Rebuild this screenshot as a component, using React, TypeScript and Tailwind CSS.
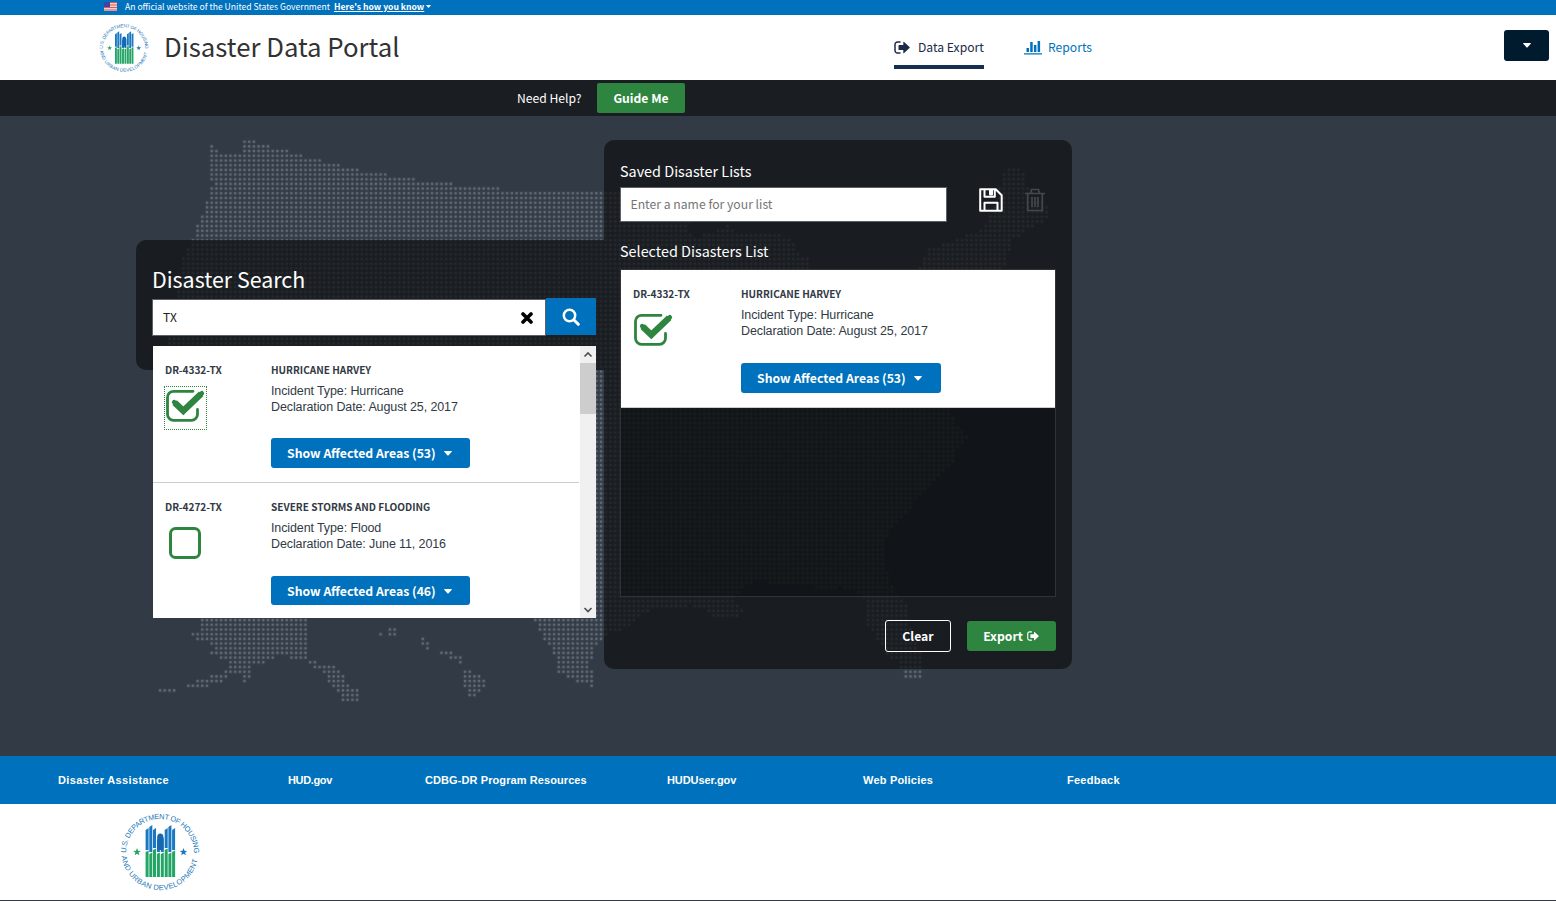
import React from "react";

type Point = [number, number];

const MAINLAND: Point[] = [
  [210, 143], [216, 150], [226, 155], [238, 156], [242, 152], [242, 139], [260, 143], [290, 152], [330, 163],
  [370, 172], [420, 180], [470, 186], [530, 191], [604, 192], [690, 193], [700, 215], [688, 226], [684, 235],
  [702, 236], [716, 232], [728, 222], [736, 234], [760, 231], [780, 233], [796, 244], [796, 251], [808, 258],
  [815, 300], [880, 300], [918, 270], [928, 250], [960, 238], [980, 230], [993, 212], [999, 190], [1003, 171],
  [1015, 168], [1025, 173], [1029, 190], [1046, 205], [1049, 218], [1030, 228], [1012, 240], [1005, 265],
  [990, 300], [960, 360], [950, 408], [958, 425], [967, 437], [955, 450], [958, 460], [940, 475], [930, 488],
  [915, 500], [910, 512], [895, 525], [884, 545], [886, 570], [893, 590], [907, 605], [908, 620], [912, 635],
  [922, 655], [923, 668], [921, 679], [906, 679], [900, 665], [888, 655], [878, 640], [868, 628], [867, 605],
  [855, 590], [840, 587], [820, 592], [812, 585], [795, 583], [775, 583], [755, 582], [740, 590], [732, 600],
  [745, 609], [747, 615], [715, 617], [705, 607], [690, 606], [665, 607], [645, 612], [630, 625], [615, 632],
  [602, 638], [594, 646], [591, 665], [594, 687], [575, 681], [558, 672], [556, 660], [548, 645], [539, 632],
  [532, 617], [500, 560], [400, 520], [200, 440], [170, 380], [168, 340], [177, 285], [183, 260], [193, 240],
  [200, 218], [208, 200], [212, 185], [210, 160],
];

const ISLANDS: Point[][] = [
  [[208, 600], [306, 600], [306, 656], [314, 661], [320, 664], [326, 667], [331, 661], [344, 674], [350, 686], [360, 688], [360, 702], [343, 701], [330, 684], [326, 673], [316, 668], [307, 661], [290, 659], [278, 652], [276, 659], [258, 664], [250, 668], [252, 677], [244, 683], [240, 675], [232, 674], [222, 681], [206, 687], [186, 689], [186, 684], [200, 680], [222, 673], [230, 663], [218, 657], [209, 654], [214, 645], [205, 641], [191, 638], [191, 632], [203, 634], [200, 622]],
  [[158, 688], [178, 687], [178, 692], [158, 692]],
  [[378, 632], [385, 632], [385, 637], [378, 637]],
  [[388, 630], [393, 627], [398, 628], [398, 636], [388, 636]],
  [[417, 641], [424, 637], [431, 648], [426, 651]],
  [[440, 650], [452, 651], [463, 658], [462, 665], [450, 658], [440, 656]],
  [[464, 668], [478, 674], [488, 685], [477, 694], [468, 698], [463, 684]],
];

function inside(x: number, y: number, poly: Point[]) {
  let hit = false;
  for (let i = 0, j = poly.length - 1; i < poly.length; j = i++) {
    const [xi, yi] = poly[i];
    const [xj, yj] = poly[j];
    if (yi > y !== yj > y && x < ((xj - xi) * (y - yi)) / (yj - yi) + xi) hit = !hit;
  }
  return hit;
}

const PITCH = 4.69;

function buildDots() {
  const shapes = [MAINLAND, ...ISLANDS];
  let d = "";
  for (let r = -12; r < 112; r++) {
    for (let c = -14; c < 182; c++) {
      const x = 216.4 + c * PITCH;
      const y = 193.3 + r * PITCH;
      if (shapes.some((s) => inside(x, y, s))) d += `M${x.toFixed(1)} ${y.toFixed(1)}h.01`;
    }
  }
  return d;
}

const DOTS = buildDots();

function DottedMap() {
  return (
    <svg className="pointer-events-none absolute inset-0" width="1556" height="640" viewBox="0 116 1556 640" fill="none" strokeLinecap="round" aria-hidden="true">
      <path d={DOTS} stroke="#38414c" strokeWidth="5" />
      <path d={DOTS} stroke="#5f6772" strokeWidth="2.6" />
    </svg>
  );
}

const BARS = [
  [25.6, 16.5, 39], [29.3, 13.5, 41], [33, 16.5, 37], [36.9, 26, 41],
  [40.8, 26, 41], [44.7, 16.5, 37], [48.4, 13.5, 41], [52.1, 16.5, 39],
];

function Star({ x, color }: { x: number; color: string }) {
  return <path transform={`translate(${x} 40)`} fill={color} d="M0-3.900 1-1.200 3.800-1.100 1.600.6 2.350 3.300 0 1.700-2.350 3.300-1.600.6-3.800-1.100-1-1.200Z" />;
}

function HudSeal({ size, id }: { size: number; id: string }) {
  return (
    <svg width={size} height={size} viewBox="0 0 80 80" className="shrink-0 overflow-visible" role="img">
      <defs>
        <path id={`${id}-top`} d="M6 41A34 34 0 1 1 74 41" />
        <path id={`${id}-bottom`} d="M1.700 44.300A38.600 38.600 0 0 0 78.300 44.300" />
      </defs>
      <g fill="#2277b8" fontFamily="Liberation Sans, Arial, sans-serif" fontSize="7.400">
        <text><textPath href={`#${id}-top`} textLength="107">U.S. DEPARTMENT OF HOUSING</textPath></text>
        <text><textPath href={`#${id}-bottom`} textLength="108">AND URBAN DEVELOPMENT</textPath></text>
      </g>
      {BARS.map(([x, top, split]) => (
        <g key={x}>
          <path d={`M${x} ${top + 1.5}l3-2V${split - 1}h-3Z`} fill="#1a78c2" />
          <path d={`M${x} ${split + 1}l3-1.5V65h-3Z`} fill="#22a565" />
        </g>
      ))}
      <path d="M37.200 38V25q0-3.500 3.100-3.500t3.100 3.500V38Z" fill="#1668b0" />
      <Star x={17} color="#22a565" />
      <Star x={63.5} color="#1a78c2" />
    </svg>
  );
}

function ExportIcon({ className }: { className: string }) {
  return (
    <svg viewBox="0 0 16 13" className={className} aria-hidden="true">
      <path d="M6 1H3.500A2.500 2.500 0 0 0 1 3.500v6A2.500 2.500 0 0 0 3.500 12H6" fill="none" stroke="currentColor" strokeWidth="1.500" strokeLinecap="round" />
      <path d="M4.500 4.600q0-.6.6-.6H9.300V1.300q0-1 .8-.3l5.400 5q.5.500 0 1l-5.400 5q-.8.700-.8-.3V9H5.100q-.6 0-.6-.6Z" fill="currentColor" />
    </svg>
  );
}

function Caret({ className }: { className: string }) {
  return (
    <svg viewBox="0 0 8 5" className={className} aria-hidden="true">
      <path d="M.6 0h6.800q.9 0 .3.700L4.400 4.400q-.4.400-.8 0L.3.700Q-.3 0 .6 0Z" fill="currentColor" />
    </svg>
  );
}

function CheckBox({ checked }: { checked: boolean }) {
  return checked ? (
    <svg width="40" height="34" viewBox="0 0 40 34" className="shrink-0" fill="none" aria-hidden="true">
      <path d="M27 2.300H7.500A6 6 0 0 0 1.500 8.300v17A6 6 0 0 0 7.500 31.300h18a6 6 0 0 0 6-6V20.500" stroke="#2e8540" strokeWidth="2.800" strokeLinecap="round" />
      <path d="M8.700 13.700 17.300 21.800 35.200 4.800" stroke="#2e8540" strokeWidth="6.400" />
      <path d="M8.200 13.200 17.300 21.800 35.800 4.300" stroke="#2e8540" strokeWidth="4.600" strokeLinecap="round" />
    </svg>
  ) : (
    <svg width="34" height="34" viewBox="0 0 34 34" className="shrink-0" fill="none" aria-hidden="true">
      <rect x="2.500" y="2.500" width="29" height="29" rx="5" stroke="#2e8540" strokeWidth="3" />
    </svg>
  );
}

interface Disaster {
  id: string;
  name: string;
  type: string;
  date: string;
  areas: number;
}

const HARVEY: Disaster = { id: "DR-4332-TX", name: "HURRICANE HARVEY", type: "Hurricane", date: "August 25, 2017", areas: 53 };
const FLOODING: Disaster = { id: "DR-4272-TX", name: "SEVERE STORMS AND FLOODING", type: "Flood", date: "June 11, 2016", areas: 46 };

interface RowProps {
  item: Disaster;
  left: string;
  button: string;
  checkbox: React.ReactNode;
  className: string;
}

function DisasterRow({ item, left, button, checkbox, className }: RowProps) {
  return (
    <div className={`flex bg-white pl-3 text-[#323a45] ${className}`}>
      <div className={`shrink-0 ${left}`}>
        <div className="text-[10.100px] leading-4 font-bold">{item.id}</div>
        {checkbox}
      </div>
      <div>
        <div className="text-[10.050px] leading-4 font-bold whitespace-nowrap">{item.name}</div>
        <div className="mt-[5px] font-[Liberation_Sans,Arial,sans-serif] text-[12.5px] leading-4 tracking-[-0.11px] whitespace-nowrap">
          <div>Incident Type: {item.type}</div>
          <div>Declaration Date: {item.date}</div>
        </div>
        <button className={`flex items-center rounded-[3px] bg-[#0071bc] pl-4 text-[12.25px] font-bold whitespace-nowrap text-white ${button}`}>
          Show Affected Areas ({item.areas})
          <Caret className="ml-2 h-[5px] w-2" />
        </button>
      </div>
    </div>
  );
}

function TopBanner() {
  return (
    <div className="flex h-[15px] items-center bg-[#0071bc] pb-0.5 pl-[104px] text-[8.6px] leading-[13px] text-white">
      <svg width="13" height="9" viewBox="0 0 13 9" className="mr-2" aria-hidden="true">
        <rect width="13" height="9" fill="#f3d0d0" />
        <path d="M0 .5h13M0 3h13M0 5.500h13M0 8h13" stroke="#dc5a5a" strokeWidth="1.200" />
        <rect width="6" height="5" fill="#3848a4" />
      </svg>
      <span className="whitespace-nowrap">An official website of the United States Government</span>
      <a className="ml-1 font-bold whitespace-nowrap underline">Here's how you know</a>
      <Caret className="ml-0.5 h-[3px] w-[5px]" />
    </div>
  );
}

function Header() {
  return (
    <header className="flex h-[65px] bg-white pl-[99px]">
      <div className="mt-2 h-[50px]"><HudSeal size={50} id="head" /></div>
      <h1 className="mt-[11px] ml-[15px] w-[730px] text-[25.75px] leading-10 whitespace-nowrap text-[#323232]">Disaster Data Portal</h1>
      <nav className="flex flex-1 text-[12.15px]">
        <a className="mr-10 flex h-[54px] w-[90px] items-center border-b-4 border-[#162e51] pt-3.5 whitespace-nowrap text-[#1b2b48]">
          <ExportIcon className="mr-2 h-[13px] w-4" />
          Data Export
        </a>
        <a className="flex h-[50px] items-center pt-3.5 text-[#0071bc]">
          <svg width="18" height="15" viewBox="0 0 18 15" className="mr-1.5" fill="currentColor" aria-hidden="true">
            <path d="M2.500 8h2.500v4H2.500zM6.200 2h2.500v10H6.200zM9.900 5h2.500v7H9.900zM13.600 1h2.500v11h-2.500zM0 13.200h18v1.300H0z" />
          </svg>
          Reports
        </a>
      </nav>
      <button className="mt-[15px] mr-[7px] flex h-[31px] w-[45px] items-center justify-center rounded-[3px] bg-[#001b2e] text-white">
        <Caret className="h-[5px] w-2" />
      </button>
    </header>
  );
}

function SearchPanel() {
  return (
    <section className="mt-[124px] ml-[136px] h-[130px] w-[468px] shrink-0 rounded-l-[10px] bg-[rgba(18,20,22,0.75)] pt-[23px] pl-4">
      <h2 className="text-[21.4px] leading-8 text-white">Disaster Search</h2>
      <div className="mt-[3px] flex w-[444px]">
        <div className="mt-px flex h-[37px] w-[394px] items-center justify-between border border-[#5b616b] bg-white pr-3 pl-2.5 text-[12px] text-[#212121]">
          <span className="-mt-0.5">TX</span>
          <svg width="12" height="12" viewBox="0 0 12 12" aria-hidden="true"><path d="m2 2 8 8M10 2l-8 8" stroke="#000" strokeWidth="3.600" strokeLinecap="round" /></svg>
        </div>
        <button className="flex h-[37px] w-[50px] items-center justify-center bg-[#0071bc]">
          <svg width="18" height="18" viewBox="0 0 18 18" fill="none" stroke="#fff" aria-hidden="true"><circle cx="7.500" cy="7.500" r="5.700" strokeWidth="2.500" /><path d="m12 12 4.300 4.300" strokeWidth="3" strokeLinecap="round" /></svg>
        </button>
      </div>
      <div className="mt-[10px] ml-px flex h-[272px] w-[443px] bg-white">
        <div className="w-[426px] overflow-hidden">
          <DisasterRow item={HARVEY} left="w-[106px]" button="mt-[23px] h-[30px] w-[199px]" className="h-[137px] border-b border-[#cccccc] pt-4"
            checkbox={<div className="mt-2 -ml-px flex h-[44px] w-[43px] items-start border border-dotted border-[#2e8540] pt-0.5 pl-px"><CheckBox checked /></div>} />
          <DisasterRow item={FLOODING} left="w-[106px]" button="mt-6 h-[29px] w-[199px] pt-px" className="h-[135px] pt-4"
            checkbox={<div className="mt-[11px] ml-[3px]"><CheckBox checked={false} /></div>} />
        </div>
        <div className="ml-px flex w-4 flex-col items-center justify-between bg-[#f0f0f0] text-[#505050]">
          <svg width="16" height="17" viewBox="0 0 16 17" fill="none" stroke="currentColor" strokeWidth="1.700"><path d="m4.500 10.500 3.500-3.500 3.500 3.500" /></svg>
          <div className="mb-auto h-[51px] w-4 bg-[#cdcdcd]" />
          <svg width="16" height="17" viewBox="0 0 16 17" fill="none" stroke="currentColor" strokeWidth="1.700"><path d="m4.500 7 3.500 3.500L11.500 7" /></svg>
        </div>
      </div>
    </section>
  );
}

function SelectionPanel() {
  return (
    <section className="mt-6 h-[529px] w-[468px] shrink-0 rounded-[10px] bg-[rgba(18,20,22,0.75)] px-4 pt-[19px]">
      <h3 className="text-[14.4px] leading-6 text-white">Saved Disaster Lists</h3>
      <div className="mt-1 flex">
        <input className="h-[35px] w-[327px] border border-[#5b616b] bg-white pr-2 pb-0.5 pl-[9.5px] text-[12.2px] placeholder:text-[#757575]" placeholder="Enter a name for your list" />
        <svg width="24" height="24" viewBox="0 0 24 24" className="mt-[1px] ml-8" fill="none" stroke="#fff" strokeWidth="2" strokeLinejoin="round" aria-hidden="true">
          <path d="M1.200 1.200h15.500l6 6v15.500H1.200ZM5.500 1.200v7.500h10.300V1.200M5.500 22.500v-7.800h13v7.800" />
          <path d="M11 2v4.500h2V2Z" />
        </svg>
        <svg width="20" height="24" viewBox="0 0 20 24" className="mt-[1px] ml-[21.5px]" fill="none" stroke="#44474c" strokeWidth="1.700" aria-hidden="true">
          <path d="M0 5.500h20M5.500 5.500l1-4h7l1 4M2.700 5.500v17h14.600v-17M7 9v10M10 9v10M13 9v10" />
        </svg>
      </div>
      <h3 className="mt-[17px] text-[14.4px] leading-6 text-white">Selected Disasters List</h3>
      <div className="mt-[6px] h-[328px] border border-[#303338] bg-[rgba(8,13,15,0.45)]">
        <DisasterRow item={HARVEY} left="w-[108px]" button="mt-6 h-[30px] w-[200px]" className="h-[138px] border-b border-[#cccccc] pt-4"
          checkbox={<div className="mt-[11px] ml-px"><CheckBox checked /></div>} />
      </div>
      <div className="mt-[23px] flex items-center justify-end gap-4 text-[12.2px] font-bold text-white">
        <button className="h-8 w-[66px] rounded-[3px] border border-white">Clear</button>
        <button className="flex h-[30px] w-[89px] items-center justify-center gap-1 rounded-[3px] bg-[#2e8540] pr-px">
          Export
          <ExportIcon className="h-[10px] w-3" />
        </button>
      </div>
    </section>
  );
}

function FooterLinks() {
  return (
    <div className="flex h-12 items-center bg-[#0071bc] pt-px pl-[58px] font-[Liberation_Sans,Arial,sans-serif] text-[11px] font-bold whitespace-nowrap text-white">
      <a className="w-[230px] tracking-[0.36px]">Disaster Assistance</a>
      <a className="w-[137px] tracking-[-0.35px]">HUD.gov</a>
      <a className="w-[242px] tracking-[0.09px]">CDBG-DR Program Resources</a>
      <a className="w-[196px] tracking-[-0.1px]">HUDUser.gov</a>
      <a className="w-[204px] tracking-[0.2px]">Web Policies</a>
      <a className="tracking-[0.25px]">Feedback</a>
    </div>
  );
}

export default function App() {
  return (
    <div className="h-[901px] w-[1556px] overflow-hidden bg-white font-['Noto_Sans_CJK_SC',sans-serif]">
      <TopBanner />
      <Header />
      <div className="flex h-9 items-center bg-[#1a1d21] pl-[517px] text-[12.15px] text-white">
        <span className="w-20">Need Help?</span>
        <button className="h-[30px] w-[88px] rounded-[2px] bg-[#2e8540] font-bold">Guide Me</button>
      </div>
      <main className="relative h-[640px] bg-[#323a45]">
        <DottedMap />
        <div className="relative flex items-start">
          <SearchPanel />
          <SelectionPanel />
        </div>
      </main>
      <footer>
        <FooterLinks />
        <div className="h-[97px] border-b border-[#323a45] bg-white pt-2 pl-[120px]">
          <HudSeal size={80} id="foot" />
        </div>
      </footer>
    </div>
  );
}
